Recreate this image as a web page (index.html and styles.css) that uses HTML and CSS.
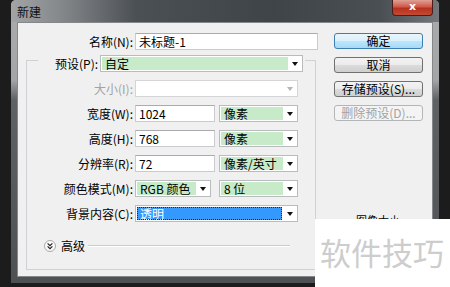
FILE: index.html
```html
<!DOCTYPE html>
<html lang="zh-CN">
<head>
    <meta charset="UTF-8">
    <meta name="viewport" content="width=device-width, initial-scale=1.0">
    <title>新建</title>
    <link rel="stylesheet" href="styles.css">
</head>
<body>
    <div class="window">
        <div class="titlebar">
            <span class="title">新建</span>
            <span class="close">x</span>
        </div>
        <div class="client">
            <div class="main">
                <div class="row name-row">
                    <label class="lbl">名称(N):</label>
                    <div class="textbox name-box">未标题-1</div>
                </div>

                <div class="group">
                    <div class="preset-row">
                        <label class="preset-lbl">预设(P):</label>
                        <div class="combo preset-combo"><span class="val">自定</span><span class="arrow"></span></div>
                    </div>

                    <div class="row">
                        <label class="lbl disabled">大小(I):</label>
                        <div class="combo long off"><span class="val"></span><span class="arrow"></span></div>
                    </div>

                    <div class="row">
                        <label class="lbl">宽度(W):</label>
                        <div class="textbox num">1024</div>
                        <div class="combo unit"><span class="val">像素</span><span class="arrow"></span></div>
                    </div>

                    <div class="row">
                        <label class="lbl">高度(H):</label>
                        <div class="textbox num">768</div>
                        <div class="combo unit"><span class="val">像素</span><span class="arrow"></span></div>
                    </div>

                    <div class="row">
                        <label class="lbl">分辨率(R):</label>
                        <div class="textbox num">72</div>
                        <div class="combo unit"><span class="val">像素/英寸</span><span class="arrow"></span></div>
                    </div>

                    <div class="row">
                        <label class="lbl">颜色模式(M):</label>
                        <div class="combo mode"><span class="val">RGB 颜色</span><span class="arrow"></span></div>
                        <div class="combo bits"><span class="val">8 位</span><span class="arrow"></span></div>
                    </div>

                    <div class="row">
                        <label class="lbl">背景内容(C):</label>
                        <div class="combo long picked"><span class="val">透明</span><span class="arrow"></span></div>
                    </div>

                    <div class="advanced">
                        <svg class="adv-icon" width="12" height="12" viewBox="0 0 12 12">
                            <circle cx="6" cy="6" r="5.5" fill="#fafafa" stroke="#a9a9a9"/>
                            <path d="M3.6 3.4 L6 5.6 L8.4 3.4 M3.6 6.4 L6 8.6 L8.4 6.4" fill="none" stroke="#222" stroke-width="1.2"/>
                        </svg>
                        <span class="adv-text">高级</span>
                        <span class="adv-line"></span>
                    </div>
                </div>
            </div>

            <div class="side">
                <button class="btn default">确定</button>
                <button class="btn">取消</button>
                <button class="btn">存储预设(S)...</button>
                <button class="btn" disabled>删除预设(D)...</button>
                <div class="info">图像大小:</div>
            </div>
        </div>
    </div>

    <div class="watermark">软件技巧</div>
</body>
</html>
```

FILE: styles.css
```css
body {
    margin: 0;
    width: 450px;
    height: 287px;
    overflow: hidden;
    position: relative;
    background-color: #1c1c1c;
    font-family: "Noto Sans CJK SC", "Liberation Sans", sans-serif;
    font-size: 12px;
    color: #000;
}
.window {
    width: 428px;
    height: 283px;
    margin-left: 11px;
    padding: 0 6px 6px 6px;
    box-sizing: border-box;
    border-radius: 5px 5px 0 0;
    background: linear-gradient(to bottom, #a9abad 0, #a3a5a7 80px, #5f6265 100px, #4e5154 100%);
}
.titlebar {
    height: 22px;
    margin: 0 -6px;
    padding: 0 6px;
    display: flex;
    justify-content: space-between;
    align-items: flex-start;
    border-radius: 5px 5px 0 0;
    background: linear-gradient(to right, #a2a4a6 0, #85888b 50px, #4b5055 125px, #3f4449 260px, #4a4f54 370px, #74787c 100%);
}
.title {
    line-height: 23px;
    color: #111;
}
.close {
    width: 41px;
    height: 16px;
    box-sizing: border-box;
    border: 1px solid #4b1c18;
    border-top: none;
    border-radius: 0 0 4px 4px;
    background: linear-gradient(to bottom, #e0a095 0, #cf5a4a 45%, #b8301f 55%, #c24a33 100%);
    color: #fff;
    font-family: "DejaVu Sans", sans-serif;
    font-weight: bold;
    font-size: 11px;
    line-height: 13px;
    text-align: center;
}
.client {
    height: 255px;
    box-sizing: border-box;
    border: 1px solid #85878a;
    background-color: #f0f0f0;
    padding: 10px 9px 0 8px;
    display: flex;
}
.main {
    width: 292px;
}
.row {
    display: flex;
    align-items: center;
    height: 17px;
    margin-top: 8px;
}
.name-row {
    margin-top: 0;
}
.lbl {
    width: 106px;
    margin-right: 2px;
    text-align: right;
    white-space: nowrap;
    line-height: 17px;
}
.name-row .lbl {
    width: 107px;
}
.lbl.disabled {
    color: #a3a3a3;
}
.textbox {
    height: 17px;
    box-sizing: border-box;
    border: 1px solid #c9cbce;
    border-top-color: #a9abae;
    background-color: #fff;
    padding-left: 3px;
    line-height: 15px;
    white-space: nowrap;
}
.name-box {
    width: 183px;
}
.num {
    width: 80px;
    margin-right: 4px;
}
.group {
    width: 290px;
    box-sizing: border-box;
    margin-top: 10px;
    border: 1px solid #cfd1d3;
    padding-bottom: 16px;
}
.preset-row {
    display: flex;
    align-items: center;
    width: fit-content;
    height: 17px;
    margin: -6px 0 0 11px;
    padding: 0 2px 0 17px;
    background-color: #f0f0f0;
}
.preset-lbl {
    white-space: nowrap;
    line-height: 17px;
}
.preset-row + .row {
    margin-top: 8px;
}
.combo {
    display: flex;
    height: 17px;
    box-sizing: border-box;
    border: 1px solid #b9bbbe;
    background-color: #fff;
}
.combo .val {
    flex: 1;
    margin: 1px 0 1px 1px;
    padding-left: 3px;
    background-color: #c7ebc8;
    line-height: 13px;
    white-space: nowrap;
}
.combo .arrow {
    width: 14px;
    display: flex;
    justify-content: center;
    align-items: center;
}
.combo .arrow::after {
    content: "";
    border-top: 4px solid #111;
    border-left: 3px solid transparent;
    border-right: 3px solid transparent;
}
.preset-combo {
    width: 203px;
    margin-left: 2px;
}
.unit {
    width: 79px;
}
.mode {
    width: 76px;
}
.bits {
    width: 79px;
    margin-left: 8px;
}
.long {
    width: 163px;
}
.off {
    border-color: #d3d5d7;
}
.off .val {
    background-color: transparent;
}
.off .arrow::after {
    border-top-color: #b5b5b5;
}
.picked .val {
    background-color: #3399ff;
    color: #fff;
    outline: 1px dotted #1b2a3a;
    outline-offset: -1px;
    margin-right: 1px;
}
.advanced {
    display: flex;
    align-items: center;
    height: 14px;
    margin-top: 17px;
    padding-left: 17px;
}
.adv-text {
    margin-left: 5px;
    line-height: 14px;
}
.adv-line {
    flex: 1;
    margin: 0 25px 0 3px;
    border-top: 1px solid #c9cbcd;
    border-bottom: 1px solid #fff;
}
.side {
    width: 89px;
    margin-left: 16px;
    display: flex;
    flex-direction: column;
}
.btn {
    width: 89px;
    height: 16px;
    margin-bottom: 8px;
    padding: 0;
    box-sizing: border-box;
    border: 1px solid #707070;
    border-radius: 3px;
    background: linear-gradient(to bottom, #f3f3f3 0, #ebebeb 50%, #dcdcdc 50%, #cfcfcf 100%);
    font-family: inherit;
    font-size: 12px;
    line-height: 14px;
    color: #000;
}
.btn.default {
    border-color: #3c7fb1;
    background: linear-gradient(to bottom, #eaf6fd 0, #d9f0fc 50%, #bee6fd 50%, #a7d9f5 100%);
}
.btn:disabled {
    border-color: #b3b6b9;
    background: #f4f4f4;
    color: #a3a3a3;
}
.info {
    margin-top: 85px;
    padding-left: 22px;
    font-size: 11px;
    line-height: 13px;
}
.watermark {
    position: absolute;
    left: 315px;
    top: 219px;
    width: 135px;
    height: 68px;
    box-sizing: border-box;
    padding: 17px 0 0 5px;
    background-color: #fff;
    color: #cdcdcd;
    font-size: 31px;
    line-height: 31px;
    white-space: nowrap;
}
```
